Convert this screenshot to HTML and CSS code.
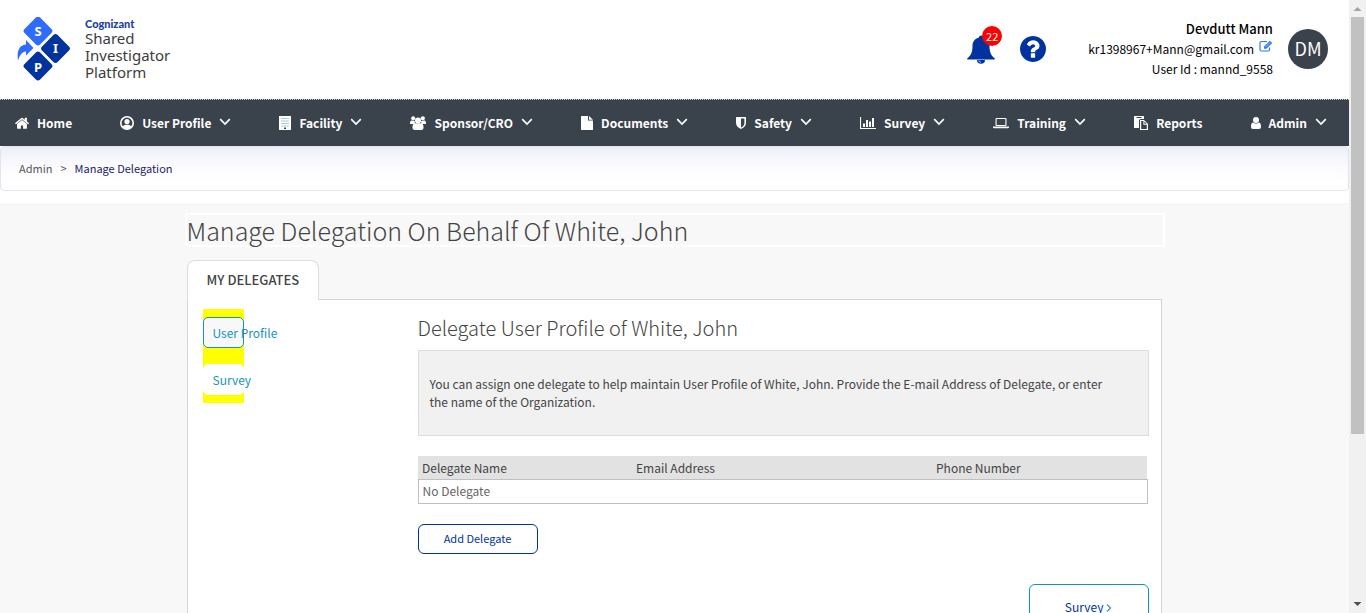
FILE: index.html
```html
<!DOCTYPE html>
<html lang="en">
<head>
<meta charset="utf-8">
<title>Manage Delegation</title>
<meta name="viewport" content="width=device-width, initial-scale=1">
<link rel="stylesheet" href="styles.css">
</head>
<body>
<svg class="sprite" aria-hidden="true">
  <symbol id="chevron" viewBox="0 0 12 8"><path d="M1.200 1.200 6 6l4.800-4.800" fill="none" stroke="currentColor" stroke-width="1.700"/></symbol>
</svg>
<div class="window">
  <div class="page">
    <header class="header">
      <a class="brand" href="#" aria-label="Cognizant Shared Investigator Platform">
        <svg class="brand-mark" viewBox="0 0 54 66" aria-hidden="true">
          <rect x="10" y="3" width="22" height="22" rx="3" transform="rotate(45 21 14)" fill="#2f6bff"/>
          <rect x="27.500" y="20.500" width="22" height="22" rx="3" transform="rotate(45 38.500 31.500)" fill="#0033a0"/>
          <rect x="10" y="38" width="22" height="22" rx="3" transform="rotate(45 21 49)" fill="#0033a0"/>
          <path d="M1 43.500C-.5 33 3 28 9 27.500v-4.500L16.500 31 9 38.500v-4C5 34.500 3 38 1 43.500z" fill="#2f6bff"/>
          <g class="brand-letters"><text x="21" y="18.500">S</text><text x="38.500" y="36">I</text><text x="21" y="54.500">P</text></g>
        </svg>
        <span class="brand-text"><strong>Cognizant</strong><span>Shared</span><span>Investigator</span><span>Platform</span></span>
      </a>
      <div class="account">
        <button class="icon-button bell" aria-label="Notifications">
          <svg viewBox="0 0 28 30" aria-hidden="true"><path d="M14 1.500c1.200 0 2 .8 2 2 4.200 1 6.500 4.200 6.500 8.500 0 6.500 1.700 9.700 5.200 12.300v1.200H.3v-1.200C3.800 21.700 5.500 18.500 5.500 12c0-4.300 2.300-7.500 6.500-8.500 0-1.200.8-2 2-2z"/><path d="M10 26h8a4 3.800 0 0 1-8 0z"/><path d="M11.700 26.500c.3 1 1 1.600 2.300 1.800" fill="none" stroke="#fff" stroke-width=".8"/></svg>
          <span class="badge">22</span>
        </button>
        <button class="icon-button help" aria-label="Help">
          <svg viewBox="128 128 1536 1536" aria-hidden="true"><path d="M1024 1376v-192q0-14-9-23t-23-9h-192q-14 0-23 9t-9 23v192q0 14 9 23t23 9h192q14 0 23-9t9-23zm256-672q0-88-55.500-163t-138.500-116-170-41q-243 0-371 213-15 24 8 42l132 100q7 6 19 6 16 0 25-12 53-68 86-92 34-24 86-24 48 0 85.500 26t37.500 59q0 38-20 61t-68 45q-63 28-115.500 86.500t-52.500 125.500v36q0 14 9 23t23 9h192q14 0 23-9t9-23q0-19 21.500-49.500t54.500-49.500q32-18 49-28.500t46-35 44.500-48 28-60.500 12.500-81zm384 192q0 209-103 385.500t-279.500 279.500-385.500 103-385.500-103-279.500-279.500-103-385.500 103-385.500 279.500-279.500 385.500-103 385.500 103 279.500 279.500 103 385.500z"/></svg>
        </button>
        <div class="identity">
          <strong>Devdutt Mann</strong>
          <span>kr1398967+Mann@gmail.com<a href="#" class="edit" aria-label="Edit email"><svg viewBox="0 0 14 12" aria-hidden="true"><path d="M8 1.500H2.500a1.500 1.500 0 0 0-1.500 1.500v6.500A1.500 1.500 0 0 0 2.500 11H9a1.500 1.500 0 0 0 1.500-1.500V7.500" fill="none" stroke="#2c7be5" stroke-width="1.200"/><path d="M5 8.800V6.500L10.800.7 13.200 3 7.300 8.800z" fill="#2c7be5"/><path d="M6.500 7 11 2.500" stroke="#fff" stroke-width=".6"/></svg></a></span>
          <span>User Id : mannd_9558</span>
        </div>
        <div class="avatar">DM</div>
      </div>
    </header>

    <nav class="nav" aria-label="Main">
      <a href="#"><svg class="i14" viewBox="80 200 1632 1336"><path d="M1472 992v480q0 26-19 45t-45 19h-384v-384h-256v384h-384q-26 0-45-19t-19-45v-480q0-1 .5-3t.5-3l575-474 575 474q1 2 1 6zm223-69l-62 74q-8 9-21 11h-3q-13 0-21-7l-692-577-692 577q-12 8-24 7-13-2-21-11l-62-74q-8-10-7-23.500t11-21.500l719-599q32-26 76-26t76 26l244 204v-195q0-14 9-23t23-9h192q14 0 23 9t9 23v408l219 182q10 8 11 21.500t-7 23.500z"/></svg>Home</a>
      <a href="#"><svg class="i14" viewBox="0 0 14 14"><circle cx="7" cy="7" r="6.200" fill="none" stroke="currentColor" stroke-width="1.600"/><circle cx="7" cy="5.600" r="2.600"/><path d="M2.500 11.300c.6-2 2-2.600 4.500-2.600s3.900.6 4.500 2.600L7 13.500z"/></svg>User Profile<svg class="chev"><use href="#chevron"/></svg></a>
      <a href="#"><svg class="i12" viewBox="0 0 12 14"><path d="M0 0h12v14H0z"/><path d="M2 2.500h8M2 5h8M2 7.500h8M2 10h8" stroke="#a9cbd8" stroke-width="1"/><path d="M5 11.500h2V13H5z" fill="#3a424b"/></svg>Facility<svg class="chev"><use href="#chevron"/></svg></a>
      <a href="#"><svg class="i16" viewBox="0 0 16 14"><circle cx="3.200" cy="2.300" r="2.100"/><circle cx="12.800" cy="2.300" r="2.100"/><path d="M0 8c0-2.200.5-3.400 1.500-3.400L5 5l-.5 3H1.200C.4 8 0 8 0 8zM16 8c0-2.200-.5-3.400-1.500-3.400L11 5l.5 3z"/><circle cx="8" cy="4.500" r="3"/><path d="M2.500 11.500c0-3 1-4.300 2.500-4.300h6c1.500 0 2.500 1.300 2.500 4.300 0 1.600-.8 2.500-2 2.500h-7c-1.200 0-2-.9-2-2.500z"/></svg>Sponsor/CRO<svg class="chev"><use href="#chevron"/></svg></a>
      <a href="#"><svg class="i12" viewBox="0 0 12 14"><path d="M0 .5Q0 0 .6 0H7v4.500h5v9q0 .5-.6.5H.6Q0 14 0 13.500zM8 0l4 3.700H8z"/></svg>Documents<svg class="chev"><use href="#chevron"/></svg></a>
      <a href="#"><svg class="i10" viewBox="0 0 10 12"><path fill-rule="evenodd" d="M0 .5Q0 0 .5 0h9q.5 0 .5.500V6c0 3-2.500 5-5 6-2.500-1-5-3-5-6zM5 1.500v9c2-1 3.400-2.500 3.400-4.500V1.500z"/></svg>Safety<svg class="chev"><use href="#chevron"/></svg></a>
      <a href="#"><svg class="i16" viewBox="0 0 16 12"><path d="M0 0h1.100v10.900H16V12H0zM3 6.500h2V10H3zM6 3h2v7H6zM9 4.500h2V10H9zM12 1h2v9h-2z"/></svg>Survey<svg class="chev"><use href="#chevron"/></svg></a>
      <a href="#"><svg class="i16" viewBox="0 0 16 12"><path fill-rule="evenodd" d="M3.500 1h9q1 0 1 1v6q0 1-1 1h-9q-1 0-1-1V2q0-1 1-1zm.1 1.100v5.800h8.800V2.100zM0 9.600h16v.8q0 .8-1.400.8H1.400Q0 11.200 0 10.400z"/></svg>Training<svg class="chev"><use href="#chevron"/></svg></a>
      <a href="#"><svg class="i14" viewBox="0 0 14 14"><path fill-rule="evenodd" d="M0 .6Q0 0 .6 0h8.800q.6 0 .6.600V3H6.600Q5 3 5 4.600V12H.6Q0 12 0 11.400zM2.500 1v1h5V1z"/><path fill-rule="evenodd" d="M6.600 4H10l4 4v5.400q0 .6-.6.600H6.600q-.6 0-.6-.6V4.600q0-.6.600-.6zm.6 1.100v7.800h5.600V8.700H9.400V5.100zM10.400 5.500v2.200h2.200z"/></svg>Reports</a>
      <a href="#"><svg class="i10" viewBox="0 0 10 12"><circle cx="5" cy="3" r="3"/><path d="M0 9.800c0-3 .8-4.400 2.300-4.400C3 6 4 6.500 5 6.500S7 6 7.700 5.400C9.200 5.400 10 6.800 10 9.800 10 11.200 9.200 12 8.200 12H1.800C.8 12 0 11.200 0 9.800z"/></svg>Admin<svg class="chev"><use href="#chevron"/></svg></a>
    </nav>

    <nav class="crumbs" aria-label="Breadcrumb"><a href="#">Admin</a><span>&gt;</span><span class="current">Manage Delegation</span></nav>

    <main class="main">
      <div class="content">
        <h1>Manage Delegation On Behalf Of White, John</h1>
        <div class="tabs"><button class="tab">MY DELEGATES</button></div>
        <section class="panel">
          <div class="side"><div class="side-list"><a class="active" href="#">User Profile</a><a href="#">Survey</a></div></div>
          <div class="detail">
            <h2>Delegate User Profile of White, John</h2>
            <p class="note">You can assign one delegate to help maintain User Profile of White, John. Provide the E-mail Address of Delegate, or enter the name of the Organization.</p>
            <table class="delegates">
              <colgroup><col class="c-name"><col class="c-mail"><col></colgroup>
              <thead><tr><th>Delegate Name</th><th>Email Address</th><th>Phone Number</th></tr></thead>
              <tbody><tr><td colspan="3">No Delegate</td></tr></tbody>
            </table>
            <button class="btn add">Add Delegate</button>
            <button class="btn next">Survey <svg viewBox="0 0 6 8" aria-hidden="true"><path d="M1 .5 4.500 4 1 7.500" fill="none" stroke="#3b97bd" stroke-width="1.300"/></svg></button>
          </div>
        </section>
      </div>
    </main>
  </div>
  <div class="scrollbar" aria-hidden="true">
    <svg viewBox="0 0 17 17"><path d="M4.500 11h8L8.500 7z" fill="#a3a3a3"/></svg>
    <div class="track"><div class="thumb"></div></div>
    <svg viewBox="0 0 17 17"><path d="M4.500 6h8l-4 4z" fill="#505050"/></svg>
  </div>
</div>
</body>
</html>
```
FILE: styles.css
```css
* { box-sizing: border-box; }
body {
  margin: 0;
  font-family: "Noto Sans CJK SC", "Noto Sans", sans-serif;
  font-size: 12px;
  line-height: 18px;
  color: #444;
  background: #fff;
}
a { color: inherit; text-decoration: none; }
button { font-family: inherit; cursor: pointer; }
.sprite { position: absolute; width: 0; height: 0; }

.window { display: flex; height: 100vh; overflow: hidden; }
.page { flex: 1; min-width: 0; display: flex; flex-direction: column; }

.header {
  flex: none;
  display: flex;
  justify-content: space-between;
  align-items: center;
  height: 99px;
  padding: 0 21px 0 17px;
}
.brand { display: flex; align-items: center; gap: 14px; }
.brand-mark { width: 54px; height: 66px; }
.brand-letters { font: 700 13px "Noto Sans", sans-serif; fill: #fff; text-anchor: middle; }
.brand-text {
  display: flex;
  flex-direction: column;
  font-family: "Noto Sans", sans-serif;
  font-size: 15px;
  line-height: 17px;
  color: #3c3c3c;
}
.brand-text strong { font-family: Lato, sans-serif; font-size: 11px; font-weight: 900; line-height: 12px; color: #24409f; }

.account { display: flex; align-items: center; padding-bottom: 2px; color: #000; }
.icon-button { position: relative; border: 0; padding: 0; background: none; }
.icon-button svg { display: block; width: 100%; fill: #0033a0; }
.bell { width: 28px; margin-right: 25px; }
.help { width: 26px; }
.badge {
  position: absolute;
  top: -8px;
  right: -7px;
  width: 20px;
  height: 20px;
  border-radius: 50%;
  background: #f00;
  color: #fff;
  font-size: 11px;
  line-height: 20px;
  text-align: center;
}
.identity {
  display: flex;
  flex-direction: column;
  margin: 0 15px 0 42px;
  text-align: right;
  line-height: 20px;
}
.identity strong { font-size: 13px; font-weight: 500; }
.edit svg { width: 14px; height: 12px; margin: 0 0 2px 5px; }
.avatar {
  width: 40px;
  height: 40px;
  border-radius: 50%;
  background: #3a424b;
  color: #fff;
  font-size: 18px;
  line-height: 38px;
  text-align: center;
}

.nav {
  flex: none;
  display: flex;
  justify-content: space-between;
  align-items: center;
  height: 47px;
  padding: 0 22px 0 15px;
  border-top: 1px dotted #c8c8c8;
  background: #3a424b;
  color: #fff;
  font-size: 12px;
  font-weight: 700;
}
.nav a { display: flex; align-items: center; }
.nav svg { margin-right: 8px; fill: currentColor; }
.nav .chev { width: 12px; height: 8px; margin: 0 0 2px 8px; }
.i10 { width: 10px; height: 12px; }
.i12 { width: 12px; height: 14px; }
.i14 { width: 14px; height: 14px; }
.i16 { width: 16px; height: 14px; }

.crumbs {
  flex: none;
  display: flex;
  align-items: center;
  gap: 8px;
  height: 45px;
  margin-bottom: 12px;
  padding: 0 18px 2px;
  border: 1px solid #e1e5ee;
  border-radius: 4px;
  box-shadow: inset 0 30px 30px -24px #e6e6f8;
  font-size: 11px;
  color: #555;
}
.current { color: #1c1c64; }

.main { flex: 1; min-height: 0; padding: 10px 16px 0; background: #f8f8f8; }
.content { max-width: 980px; margin: 0 auto; }
h1, h2 { margin: 0; font-weight: 300; }
h1 { border: 2px solid #fff; font-size: 25px; line-height: 30px; }
.tabs { padding: 13px 2px 0; }
.tab {
  position: relative;
  display: block;
  height: 40px;
  margin-bottom: -1px;
  padding: 0 19px 2px;
  border: 1px solid #ddd;
  border-bottom: 0;
  border-radius: 8px 8px 0 0;
  background: #fff;
  color: #444;
  font-size: 13px;
  font-weight: 500;
}
.panel {
  display: flex;
  margin: 0 3px 0 2px;
  padding: 9px 12px 30px 15px;
  border: 1px solid #d4d4d4;
  background: #fff;
}
.side { flex: none; width: 215px; }
.side-list {
  display: flex;
  flex-direction: column;
  gap: 16px;
  width: 41px;
  padding: 8px 0;
  background: #ff0;
}
.side-list a {
  height: 31px;
  padding: 0 9px;
  border: 1px solid #fff;
  border-radius: 5px;
  background: #fff;
  color: #1595bb;
  line-height: 29px;
  white-space: nowrap;
}
.side-list .active { border-color: #1595bb; background: #f8f8f8; }
.detail { flex: 1; min-width: 0; display: flex; flex-direction: column; }
h2 { font-size: 20px; line-height: 26px; margin: 6px 0 9px; }
.note {
  margin: 0 0 20px;
  padding: 24px 32px 24px 11px;
  border: 1px solid #ddd;
  background: #f1f1f1;
}
.delegates { width: calc(100% - 1px); border-collapse: collapse; table-layout: fixed; margin-bottom: 20px; }
.c-name { width: 214px; }
.c-mail { width: 300px; }
.delegates th { height: 23px; padding: 3px 4px 2px; background: #e2e2e2; font-weight: 400; text-align: left; }
.delegates td { height: 24px; padding: 1px 4px 3px; border: 1px solid #c0c0c0; color: #666; }
.btn {
  width: 120px;
  height: 30px;
  padding: 0 0 2px;
  border: 1px solid #0033a0;
  border-radius: 6px;
  background: #fff;
  color: #0033a0;
  font-size: 11px;
}
.next { align-self: flex-end; height: 46px; margin-top: 30px; border-color: #0c98b5; font-size: 12px; }
.next svg { width: 6px; height: 8px; }

.scrollbar { flex: none; display: flex; flex-direction: column; width: 17px; background: #f1f1f1; }
.scrollbar svg { flex: none; width: 17px; height: 17px; }
.track { flex: 1; padding: 0 2px; }
.thumb { height: 72%; background: #c1c1c1; }
```
